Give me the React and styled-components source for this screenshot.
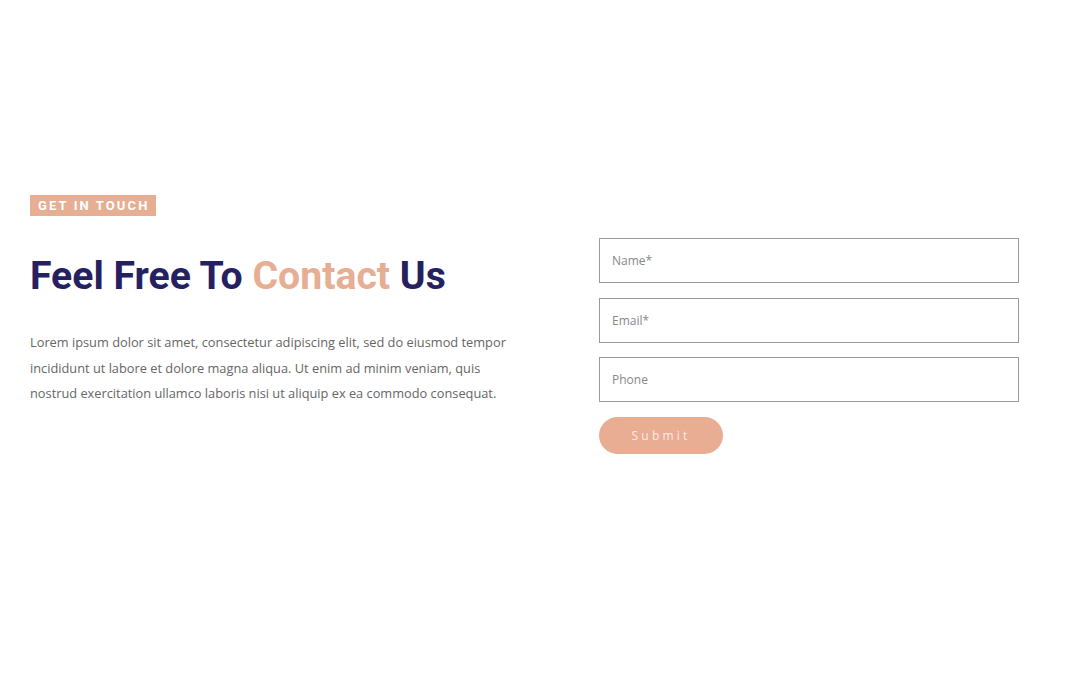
import * as React from 'react';
import styled, { createGlobalStyle } from "styled-components"

const GlobalStyle = createGlobalStyle`
  html, body {
    margin: 0;
    padding: 0;
    background: #ffffff;
  }
  * {
    box-sizing: border-box;
  }
`

const Page = styled.section`
  width: 1080px;
  height: 675px;
  display: flex;
  align-items: flex-start;
  padding: 195px 0 0 30px;
  font-family: 'Open Sans', sans-serif;
`

const Intro = styled.div`
  width: 569px;
  display: flex;
  flex-direction: column;
  align-items: flex-start;
`

const Badge = styled.span`
  background-color: #e6ae93;
  color: #ffffff;
  font-family: Roboto, sans-serif;
  font-weight: 700;
  font-size: 13px;
  letter-spacing: 2.1px;
  line-height: 21px;
  padding: 0 7px 0 8px;
`

const Heading = styled.h2`
  margin: 36px 0 0;
  font-family: Roboto, sans-serif;
  font-weight: 700;
  font-size: 39.2px;
  line-height: 48px;
  color: #252160;
`

const Accent = styled.span`
  color: #e6ae93;
`

const Text = styled.p`
  margin: 30px 0 0;
  width: 490px;
  font-size: 12.8px;
  line-height: 25.5px;
  color: #666666;
`

const Form = styled.form`
  width: 420px;
  margin-top: 43px;
  display: flex;
  flex-direction: column;
  gap: 14.5px;
`

const Field = styled.input`
  width: 100%;
  height: 45px;
  border: 1px solid #9a9a9a;
  padding: 0 12px;
  font-family: 'Open Sans', sans-serif;
  font-size: 12px;
  color: #333;
  outline: none;
  background: #fff;

  &::placeholder {
    color: #888888;
  }
`

const Button = styled.button`
  width: 124px;
  height: 37px;
  border: none;
  border-radius: 19px;
  background-color: #e8ad92;
  color: #fbe9e1;
  font-family: 'Open Sans', sans-serif;
  font-size: 12px;
  letter-spacing: 3.2px;
  cursor: pointer;
`

export default function App() {
  const fields = [
    { id: "name", placeholder: "Name*" },
    { id: "email", placeholder: "Email*" },
    { id: "phone", placeholder: "Phone" },
  ]

  return (
    <>
      <GlobalStyle />
      <Page>
        <Intro>
          <Badge>GET IN TOUCH</Badge>
          <Heading>Feel Free To <Accent>Contact</Accent> Us</Heading>
          <Text>
            Lorem ipsum dolor sit amet, consectetur adipiscing elit, sed do eiusmod tempor
            incididunt ut labore et dolore magna aliqua. Ut enim ad minim veniam, quis
            nostrud exercitation ullamco laboris nisi ut aliquip ex ea commodo consequat.
          </Text>
        </Intro>
        <Form onSubmit={(e) => e.preventDefault()}>
          {fields.map((field) => (
            <Field key={field.id} name={field.id} placeholder={field.placeholder} />
          ))}
          <Button type="submit">Submit</Button>
        </Form>
      </Page>
    </>
  )
}
